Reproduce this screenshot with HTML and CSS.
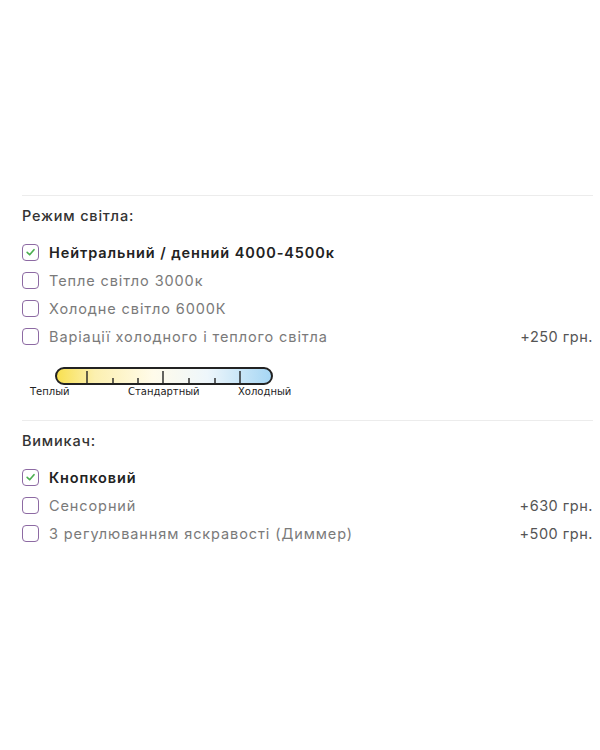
FILE: index.html
```html
<!DOCTYPE html>
<html lang="uk">
<head>
    <meta charset="UTF-8">
    <meta name="viewport" content="width=device-width, initial-scale=1.0">
    <title>Опції світильника</title>
    <link rel="stylesheet" href="styles.css">
</head>
<body>
    <div class="options">
        <!-- Режим світла -->
        <div class="option-group">
            <h4 class="group-title">Режим світла:</h4>
            <ul class="option-list">
                <li class="option checked">
                    <span class="box"><svg viewBox="0 0 18 18" width="18" height="18"><polyline points="5,9.5 8,12.3 13.2,6.2" /></svg></span>
                    <span class="name">Нейтральний / денний 4000-4500к</span>
                </li>
                <li class="option">
                    <span class="box"></span>
                    <span class="name">Тепле світло 3000к</span>
                </li>
                <li class="option">
                    <span class="box"></span>
                    <span class="name">Холодне світло 6000К</span>
                </li>
                <li class="option">
                    <span class="box"></span>
                    <span class="name">Варіації холодного і теплого світла</span>
                    <span class="price">+250 грн.</span>
                </li>
            </ul>
            <svg class="scale" viewBox="0 0 290 44" width="290" height="44">
                <defs>
                    <linearGradient id="tempGradient" x1="0" y1="0" x2="1" y2="0">
                        <stop offset="0" stop-color="#f8e04e" />
                        <stop offset="0.18" stop-color="#fcf0b0" />
                        <stop offset="0.45" stop-color="#fffbea" />
                        <stop offset="0.7" stop-color="#eef6fb" />
                        <stop offset="1" stop-color="#a5d6f4" />
                    </linearGradient>
                </defs>
                <rect x="34" y="8" width="216" height="16" rx="8" fill="url(#tempGradient)" stroke="#222" stroke-width="2" />
                <g stroke="#222" stroke-width="1.4">
                    <line x1="65" y1="11" x2="65" y2="23" />
                    <line x1="91" y1="18" x2="91" y2="23" />
                    <line x1="116" y1="18" x2="116" y2="23" />
                    <line x1="141" y1="11" x2="141" y2="23" />
                    <line x1="167" y1="18" x2="167" y2="23" />
                    <line x1="193" y1="18" x2="193" y2="23" />
                    <line x1="218" y1="11" x2="218" y2="23" />
                </g>
                <g class="scale-labels">
                    <text x="8" y="35">Теплый</text>
                    <text x="106" y="35">Стандартный</text>
                    <text x="216" y="35">Холодный</text>
                </g>
            </svg>
        </div>

        <!-- Вимикач -->
        <div class="option-group">
            <h4 class="group-title">Вимикач:</h4>
            <ul class="option-list">
                <li class="option checked">
                    <span class="box"><svg viewBox="0 0 18 18" width="18" height="18"><polyline points="5,9.5 8,12.3 13.2,6.2" /></svg></span>
                    <span class="name">Кнопковий</span>
                </li>
                <li class="option">
                    <span class="box"></span>
                    <span class="name">Сенсорний</span>
                    <span class="price">+630 грн.</span>
                </li>
                <li class="option">
                    <span class="box"></span>
                    <span class="name">З регулюванням яскравості (Диммер)</span>
                    <span class="price">+500 грн.</span>
                </li>
            </ul>
        </div>
    </div>
</body>
</html>
```
FILE: styles.css
```css
body {
    margin: 0;
    padding: 0;
    background: #fff;
    font-family: 'Inter', 'Open Sans', sans-serif;
    color: #333;
}
.options {
    margin: 0 7px 0 22px;
    padding-top: 195px;
}
.option-group {
    border-top: 1px solid #ececec;
    padding-top: 10px;
}
.group-title {
    margin: 0;
    font-size: 14.5px;
    line-height: 20px;
    font-weight: 500;
    color: #333;
    letter-spacing: 0.8px;
}
.option-list {
    list-style: none;
    margin: 12px 0 0;
    padding: 0;
}
.option {
    display: flex;
    align-items: center;
    height: 28px;
    font-size: 14.5px;
    color: #7a7a7a;
    letter-spacing: 0.9px;
}
.box {
    width: 15px;
    height: 15px;
    border: 1.5px solid #8d6aa3;
    border-radius: 4px;
    margin-right: 10px;
    display: flex;
    align-items: center;
    justify-content: center;
    flex-shrink: 0;
}
.box svg {
    width: 16px;
    height: 16px;
    fill: none;
    stroke: #4caf50;
    stroke-width: 2;
    stroke-linecap: round;
    stroke-linejoin: round;
}
.option.checked .name {
    color: #222;
    font-weight: 600;
}
.price {
    margin-left: auto;
    color: #555;
    letter-spacing: 0.5px;
}
.scale {
    display: block;
    margin: 10px 0 16px;
}
.scale-labels {
    font-family: 'DejaVu Sans', sans-serif;
    font-size: 10px;
    fill: #222;
}
```
